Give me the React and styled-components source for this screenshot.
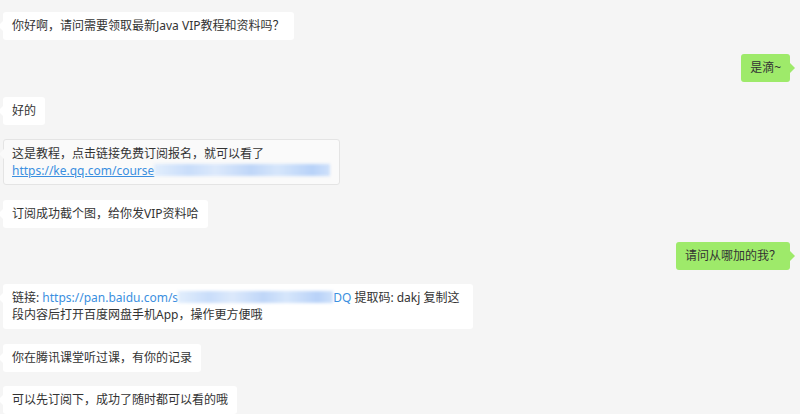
import React from "react";
import styled, { createGlobalStyle } from "styled-components";

const GlobalStyle = createGlobalStyle`
  html, body { margin: 0; padding: 0; background: #f5f5f5; }
  body {
    font-family: "Noto Sans", "Noto Sans CJK SC", sans-serif;
    font-size: 12px;
    color: #333;
  }
`;

const Chat = styled.div`
  display: flex;
  flex-direction: column;
  gap: 14.4px;
  padding: 12px 10px 0 3px;
  height: 414px;
  box-sizing: border-box;
  overflow: hidden;
  background: #f5f5f5;
`;

const Row = styled.div`
  display: flex;
  justify-content: ${(p) => (p.$mine ? "flex-end" : "flex-start")};
`;

const Bubble = styled.div`
  position: relative;
  max-width: ${(p) => p.$max || "none"};
  padding: ${(p) => (p.$pale ? "5px 9px 5px 8px" : "5px 9px 6px")};
  line-height: 17px;
  border-radius: 3px;
  background: ${(p) => (p.$mine ? "#9eea6a" : p.$pale ? "#fafafa" : "#fff")};
  border: ${(p) => (p.$pale ? "1px solid #e4e4e4" : "none")};
  color: #333;
  white-space: pre-wrap;

  &::before {
    content: "";
    position: absolute;
    top: 9px;
    ${(p) => (p.$mine ? "right: -5px;" : "left: -5px;")}
    border-top: 5px solid transparent;
    border-bottom: 5px solid transparent;
    ${(p) =>
      p.$mine
        ? "border-left: 5px solid #9eea6a;"
        : `border-right: 5px solid ${p.$pale ? "#fafafa" : "#fff"};`}
  }
`;

const Link = styled.span`
  color: #3b8fe0;
  text-decoration: ${(p) => (p.$under ? "underline" : "none")};
`;

const Blur = styled.span`
  display: inline-block;
  width: ${(p) => p.$w}px;
  height: 12px;
  vertical-align: -1px;
  background: linear-gradient(
    90deg,
    #e2eefc 0%,
    #c9ddfa 20%,
    #dce9fb 35%,
    #bfd6f8 55%,
    #d6e6fb 70%,
    #b8d2f8 90%,
    #cfe1fb 100%
  );
  filter: blur(1.5px);
`;

const messages = [
  { text: "你好啊，请问需要领取最新Java VIP教程和资料吗？" },
  { mine: true, text: "是滴~" },
  { text: "好的" },
  {
    pale: true,
    body: (
      <>
        这是教程，点击链接免费订阅报名，就可以看了
        {"\n"}
        <Link $under>https://ke.qq.com/course</Link>
        <Blur $w={176} />
      </>
    ),
  },
  { text: "订阅成功截个图，给你发VIP资料哈" },
  { mine: true, text: "请问从哪加的我？" },
  {
    max: "452px",
    body: (
      <>
        链接: <Link>https://pan.baidu.com/s</Link>
        <Blur $w={155} />
        <Link>DQ</Link> 提取码: dakj 复制这段内容后打开百度网盘手机App，操作更方便哦
      </>
    ),
  },
  { text: "你在腾讯课堂听过课，有你的记录" },
  { text: "可以先订阅下，成功了随时都可以看的哦" },
];

export default function App() {
  return (
    <>
      <GlobalStyle />
      <Chat>
        {messages.map((m, i) => (
          <Row key={i} $mine={m.mine}>
            <Bubble $mine={m.mine} $pale={m.pale} $max={m.max}>
              {m.body || m.text}
            </Bubble>
          </Row>
        ))}
      </Chat>
    </>
  );
}
